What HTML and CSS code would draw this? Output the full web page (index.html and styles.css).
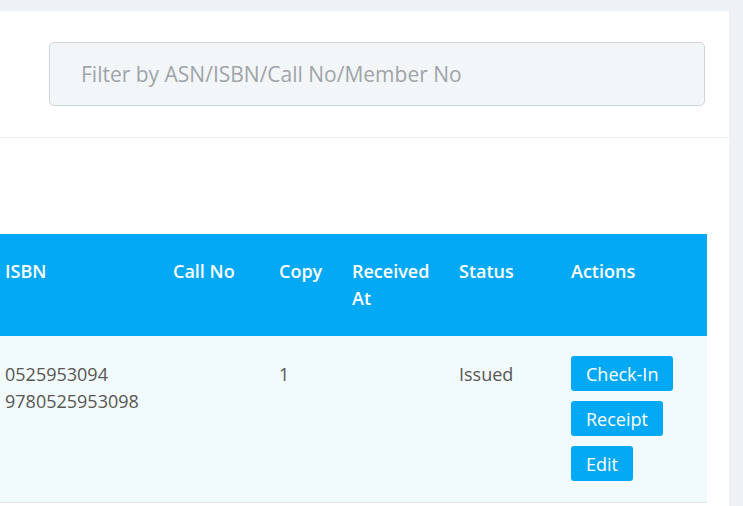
FILE: index.html
```html
<!DOCTYPE html>
<html>
<head>
<meta charset="utf-8">
<link rel="stylesheet" href="styles.css">
</head>
<body>
<div class="page">
  <div class="card">
    <div class="card-header">
      <input class="filter" type="text" placeholder="Filter by ASN/ISBN/Call No/Member No">
    </div>
    <div class="card-body">
      <table class="tbl">
        <colgroup>
          <col class="c-isbn"><col class="c-call"><col class="c-copy"><col class="c-recv"><col class="c-status"><col class="c-actions">
        </colgroup>
        <thead>
          <tr>
            <th>ISBN</th><th>Call No</th><th>Copy</th><th>Received At</th><th>Status</th><th>Actions</th>
          </tr>
        </thead>
        <tbody>
          <tr>
            <td>0525953094<br>9780525953098</td>
            <td></td>
            <td>1</td>
            <td></td>
            <td>Issued</td>
            <td class="actions">
              <button class="btn">Check-In</button>
              <button class="btn">Receipt</button>
              <button class="btn">Edit</button>
            </td>
          </tr>
        </tbody>
      </table>
    </div>
  </div>
</div>
</body>
</html>
```
FILE: styles.css
```css
html, body {
  margin: 0;
  padding: 0;
  background: #eef2f6;
  font-family: "Open Sans", "Liberation Sans", sans-serif;
}
.page {
  padding-top: 11px;
  height: 495px;
  overflow: hidden;
}
.card {
  width: 729px;
  background: #fff;
  height: 100%;
}
.card-header {
  padding: 31px 24px 31px 49px;
  border-bottom: 1px solid #e9ecef;
}
.filter {
  display: block;
  box-sizing: border-box;
  width: 100%;
  height: 64px;
  background: #f3f6f9;
  border: 1px solid #ced4da;
  border-radius: 5px;
  padding: 0 31px;
  font-family: inherit;
  font-size: 21px;
  color: #495057;
  outline: none;
}
.filter::placeholder {
  color: #a0a4a8;
}
.card-body {
  padding-top: 96px;
}
.tbl {
  width: 707px;
  table-layout: fixed;
  border-collapse: collapse;
}
.c-isbn { width: 168px; }
.c-call { width: 106px; }
.c-copy { width: 73px; }
.c-recv { width: 107px; }
.c-status { width: 112px; }
.c-actions { width: 141px; }
.tbl th {
  background: #03a9f4;
  color: #fff;
  font-weight: 600;
  font-size: 18px;
  line-height: 27px;
  text-align: left;
  vertical-align: top;
  padding: 24px 5px 24px 5px;
  height: 54px;
}
.tbl td {
  background: #f1fafd;
  color: #5a5651;
  font-size: 18px;
  line-height: 27px;
  vertical-align: top;
  padding: 25px 5px 20px 5px;
  border-bottom: 1px solid #e4e7ea;
}
.tbl td.actions {
  padding-top: 20px;
}
.btn {
  display: block;
  height: 35px;
  margin-bottom: 10px;
  padding: 0 15px;
  border: 0;
  border-radius: 3px;
  background: #03a9f4;
  color: #fff;
  font-family: inherit;
  font-size: 18px;
}
.btn:last-child {
  margin-bottom: 1px;
}
```
